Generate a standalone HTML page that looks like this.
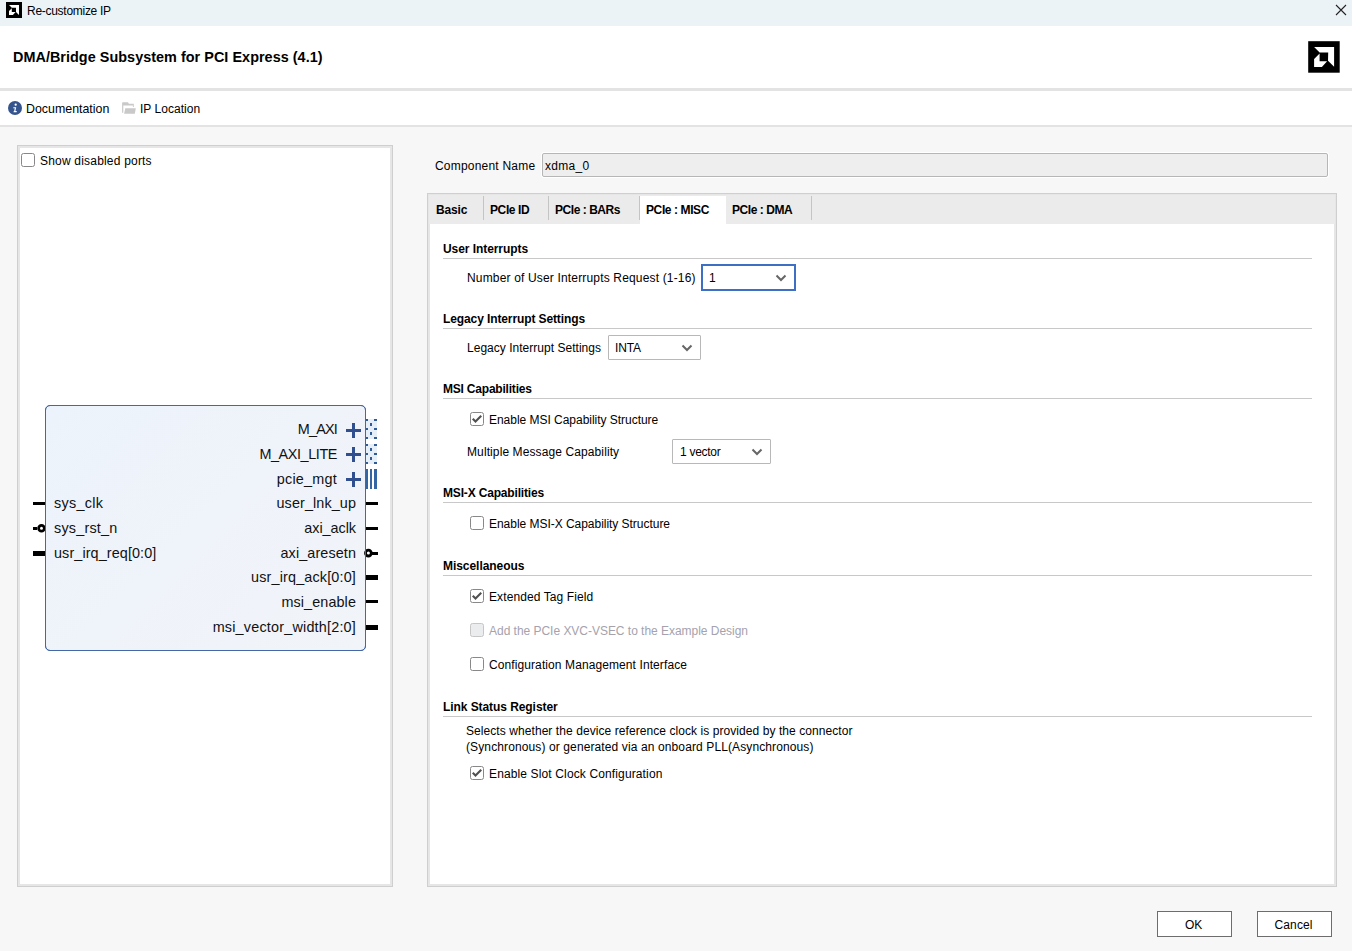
<!DOCTYPE html>
<html><head><meta charset="utf-8">
<style>
*{margin:0;padding:0;box-sizing:border-box}
html,body{width:1352px;height:951px;overflow:hidden;background:#f7f7f7;font-family:"Liberation Sans",sans-serif;font-size:12px;color:#000}
.a{position:absolute;white-space:nowrap}
#title{left:0;top:0;width:1352px;height:26px;background:#ebf3f7}
#hdr{left:0;top:26px;width:1352px;height:62px;background:#fff}
#hl1{left:0;top:88px;width:1352px;height:3px;background:#e3e3e3}
#tb{left:0;top:91px;width:1352px;height:34px;background:#fff}
#hl2{left:0;top:125px;width:1352px;height:2px;background:#e3e3e3}
.panel{background:#fff;border:1px solid #cfcfcf}
.panel:after{content:"";position:absolute;left:0;top:0;right:0;bottom:0;border:2px solid #e6e6e6}
.t12{font-size:12px;line-height:14px}
.b{font-weight:bold}
.sep{position:absolute;height:1px;background:#c8c8c8}
.cb{position:absolute;width:14px;height:14px;border:1.2px solid #888;border-radius:2.5px;background:#fff}
.cb.dis{border-color:#c6c6c6;background:#ebecee}
.dd{position:absolute;background:#fff;border:1px solid #b8b8b8;border-radius:1px}
.pin{font-size:14.4px;line-height:16px;color:#111}
.btn{position:absolute;background:#fff;border:1px solid #6d6d6d;text-align:center}
</style></head><body>
<!-- title bar -->
<div id="title" class="a"></div>
<svg class="a" style="left:6px;top:2px" width="16" height="16" viewBox="0 0 16 16">
<rect x="0" y="0" width="16" height="16" fill="#000"/>
<path d="M3 3 L13 3 L13 12.9 L10 9.9 L10 5.8 L5.8 5.8 Z" fill="#fff"/>
<path d="M3 13 L3 9.1 L5.8 6.3 L5.8 10.1 L9.6 10.1 L6.9 13 Z" fill="#fff"/>
</svg>
<div class="a" style="left:27px;top:4px;font-size:12px;letter-spacing:-0.28px;line-height:14px;color:#000">Re-customize IP</div>
<svg class="a" style="left:1335px;top:4px" width="12" height="12" viewBox="0 0 12 12"><path d="M1 1L11 11M11 1L1 11" stroke="#222" stroke-width="1.1"/></svg>
<!-- header -->
<div id="hdr" class="a"></div>
<div class="a b" style="left:13px;top:49px;font-size:14.4px;line-height:16px;letter-spacing:0.04px">DMA/Bridge Subsystem for PCI Express (4.1)</div>
<svg class="a" style="left:1308px;top:41px" width="32" height="32" viewBox="0 0 32 32">
<rect x="0.2" y="0.2" width="31.5" height="31.5" fill="#000"/>
<path d="M6.1 6.1 L26.1 6.1 L26.1 25.7 L20 19.8 L20.2 11.6 L11.6 11.6 Z" fill="#fff"/>
<path d="M6.1 25.9 L6.1 18.1 L11.6 12.6 L11.6 20.2 L19.1 20.2 L13.9 25.9 Z" fill="#fff"/>
</svg>
<div id="hl1" class="a"></div>
<!-- toolbar -->
<div id="tb" class="a"></div>
<svg class="a" style="left:8px;top:101px" width="14" height="14" viewBox="0 0 14 14">
<circle cx="7" cy="7" r="7" fill="#35538d"/>
<circle cx="7.7" cy="3.7" r="1.15" fill="#fff"/>
<path d="M5.4 6.2 L8.2 6.2 L7.4 10.1 L8.8 10.1 L8.6 11.2 L5.5 11.2 L5.8 10.1 L6.2 10.1 L6.8 7.2 L5.2 7.2 Z" fill="#fff"/>
</svg>
<div class="a t12" style="left:26px;top:102px;font-size:12.4px">Documentation</div>
<svg class="a" style="left:116px;top:97px" width="30" height="22" viewBox="0 0 30 22">
<g fill="#c9c9c9">
<path d="M6.1 6 Q6.1 5.2 6.9 5.2 L12 5.2 L12.8 6.8 L17.8 6.8 L17.8 10.1 L16.9 10.1 L16.9 8.6 L7.3 8.6 L7.3 15.8 L6.1 15.8 Z"/>
<path d="M9.3 11.2 L19.8 11.2 L18.8 16.8 L8.1 16.8 Z"/>
</g>
</svg>
<div class="a t12" style="left:140px;top:102px;letter-spacing:0.024px">IP Location</div>
<div id="hl2" class="a"></div>

<!-- left panel -->
<div class="a panel" style="left:17px;top:145px;width:376px;height:742px"></div>
<div class="cb" style="left:21px;top:153px;width:14px;height:14px"></div>
<div class="a t12" style="left:40px;top:154px;letter-spacing:0.197px">Show disabled ports</div>

<!-- block -->
<div class="a" style="left:45px;top:405px;width:321px;height:246px;border:1px solid #4467a8;border-radius:5px;background:linear-gradient(135deg,#edf3fc 0%,#f1f4f8 100%)"></div>
<svg class="a" style="left:0;top:0" width="400" height="700" viewBox="0 0 400 700">
<!-- left pins -->
<rect x="33" y="502" width="12" height="3" fill="#000"/>
<rect x="33" y="527" width="4" height="3" fill="#000"/>
<circle cx="41.5" cy="528.2" r="2.9" fill="#fff" stroke="#000" stroke-width="2.8"/>
<rect x="33" y="551" width="12" height="5" fill="#000"/>
<!-- right pins -->
<rect x="366" y="502" width="12" height="3" fill="#000"/>
<rect x="366" y="527" width="12" height="3" fill="#000"/>
<rect x="370" y="552" width="8" height="3" fill="#000"/>
<circle cx="368.4" cy="553.1" r="2.9" fill="#fff" stroke="#000" stroke-width="2.8"/>
<rect x="366" y="575" width="12" height="5" fill="#000"/>
<rect x="366" y="600" width="12" height="3" fill="#000"/>
<rect x="366" y="625" width="12" height="5" fill="#000"/>
<!-- plus signs -->
<g fill="#2f4f8f">
<rect x="346" y="429" width="15" height="3"/><rect x="352" y="423" width="3" height="15"/>
<rect x="346" y="453" width="15" height="3"/><rect x="352" y="447" width="3" height="15"/>
<rect x="346" y="478" width="15" height="3"/><rect x="352" y="472" width="3" height="15"/>
</g>
<!-- bus patterns -->
<rect x="366" y="419" width="11" height="20" fill="#e6eef8"/>
<rect x="366" y="444" width="11" height="20" fill="#e6eef8"/>
<g fill="#2f5b96">
<rect x="366" y="419" width="2" height="2"/><rect x="366" y="428" width="2" height="2"/><rect x="366" y="437" width="2" height="2"/>
<rect x="374" y="419" width="3" height="2"/><rect x="374" y="428" width="3" height="2"/><rect x="374" y="437" width="3" height="2"/>
<rect x="370" y="423" width="2" height="3"/><rect x="370" y="432" width="2" height="3"/>
<rect x="366" y="444" width="2" height="2"/><rect x="366" y="453" width="2" height="2"/><rect x="366" y="462" width="2" height="2"/>
<rect x="374" y="444" width="3" height="2"/><rect x="374" y="453" width="3" height="2"/><rect x="374" y="462" width="3" height="2"/>
<rect x="370" y="448" width="2" height="3"/><rect x="370" y="457" width="2" height="3"/>
<rect x="366" y="469" width="2" height="20" fill="#3466a4"/><rect x="370" y="469" width="2" height="20" fill="#3466a4"/><rect x="374" y="469" width="3" height="20" fill="#3466a4"/>
</g>
</svg>
<div class="a" style="left:45px;top:405px;width:321px;height:246px;border:1px solid #4467a8;border-radius:5px"></div>
<div class="a pin" style="left:54px;top:495px;letter-spacing:0.29px">sys_clk</div>
<div class="a pin" style="left:54px;top:520px;letter-spacing:0.21px">sys_rst_n</div>
<div class="a pin" style="left:54px;top:545px;letter-spacing:0.1px">usr_irq_req[0:0]</div>
<div class="a pin" style="right:1015px;top:421px;letter-spacing:-0.80px">M_AXI</div>
<div class="a pin" style="right:1015px;top:446px;letter-spacing:-0.40px">M_AXI_LITE</div>
<div class="a pin" style="right:1015px;top:471px;letter-spacing:0.23px">pcie_mgt</div>
<div class="a pin" style="right:996px;top:495px;letter-spacing:0.1px">user_lnk_up</div>
<div class="a pin" style="right:996px;top:520px;letter-spacing:-0.04px">axi_aclk</div>
<div class="a pin" style="right:996px;top:545px;letter-spacing:0.1px">axi_aresetn</div>
<div class="a pin" style="right:996px;top:569px;letter-spacing:0.16px">usr_irq_ack[0:0]</div>
<div class="a pin" style="right:996px;top:594px;letter-spacing:0.1px">msi_enable</div>
<div class="a pin" style="right:996px;top:619px;letter-spacing:0.20px">msi_vector_width[2:0]</div>

<!-- right side -->
<div class="a t12" style="left:435px;top:159px;letter-spacing:0.208px">Component Name</div>
<div class="a" style="left:542px;top:153px;width:786px;height:24px;background:#eeeeee;border:1px solid #b6b6b6;border-radius:2px;box-shadow:0 0 0 1px #fff"></div>
<div class="a t12" style="left:545px;top:159px;letter-spacing:0.285px">xdma_0</div>

<div class="a panel" style="left:427px;top:193px;width:910px;height:694px"></div>
<div class="a" style="left:429px;top:195px;width:906px;height:29px;background:#ebebeb"></div>
<div class="a" style="left:640px;top:196px;width:86px;height:28px;background:#fff"></div>
<div class="a" style="left:483px;top:196px;width:1px;height:24px;background:#c4c4c4"></div>
<div class="a" style="left:548px;top:196px;width:1px;height:24px;background:#c4c4c4"></div>
<div class="a" style="left:639px;top:196px;width:1px;height:24px;background:#c4c4c4"></div>
<div class="a" style="left:811px;top:196px;width:1px;height:24px;background:#c4c4c4"></div>
<div class="a t12 b" style="left:436px;top:203px;letter-spacing:-0.144px">Basic</div>
<div class="a t12 b" style="left:490px;top:203px;letter-spacing:-0.387px">PCIe ID</div>
<div class="a t12 b" style="left:555px;top:203px;letter-spacing:-0.456px">PCIe : BARs</div>
<div class="a t12 b" style="left:646px;top:203px;letter-spacing:-0.395px">PCIe : MISC</div>
<div class="a t12 b" style="left:732px;top:203px;letter-spacing:-0.437px">PCIe : DMA</div>

<!-- sections -->
<div class="a t12 b" style="left:443px;top:242px;letter-spacing:-0.068px">User Interrupts</div>
<div class="sep" style="left:443px;top:258px;width:869px"></div>
<div class="a t12" style="left:467px;top:271px;letter-spacing:0.165px">Number of User Interrupts Request (1-16)</div>
<div class="dd" style="left:701px;top:264px;width:95px;height:27px;border:2px solid #3d6fc4;border-radius:0"></div>
<div class="a t12" style="left:709px;top:271px">1</div>

<div class="a t12 b" style="left:443px;top:312px;letter-spacing:-0.108px">Legacy Interrupt Settings</div>
<div class="sep" style="left:443px;top:328px;width:869px"></div>
<div class="a t12" style="left:467px;top:341px;letter-spacing:0.024px">Legacy Interrupt Settings</div>
<div class="dd" style="left:608px;top:335px;width:93px;height:25px"></div>
<div class="a t12" style="left:615px;top:341px;letter-spacing:-0.11px">INTA</div>

<div class="a t12 b" style="left:443px;top:382px;letter-spacing:-0.208px">MSI Capabilities</div>
<div class="sep" style="left:443px;top:398px;width:869px"></div>
<div class="cb" style="left:470px;top:412px"></div>
<div class="a t12" style="left:489px;top:413px;letter-spacing:-0.028px">Enable MSI Capability Structure</div>
<div class="a t12" style="left:467px;top:445px;letter-spacing:0.104px">Multiple Message Capability</div>
<div class="dd" style="left:672px;top:439px;width:99px;height:25px"></div>
<div class="a t12" style="left:680px;top:445px;letter-spacing:-0.286px">1 vector</div>

<div class="a t12 b" style="left:443px;top:486px;letter-spacing:-0.168px">MSI-X Capabilities</div>
<div class="sep" style="left:443px;top:502px;width:869px"></div>
<div class="cb" style="left:470px;top:516px"></div>
<div class="a t12" style="left:489px;top:517px;letter-spacing:-0.033px">Enable MSI-X Capability Structure</div>

<div class="a t12 b" style="left:443px;top:559px;letter-spacing:-0.049px">Miscellaneous</div>
<div class="sep" style="left:443px;top:575px;width:869px"></div>
<div class="cb" style="left:470px;top:589px"></div>
<div class="a t12" style="left:489px;top:590px;letter-spacing:0.098px">Extended Tag Field</div>
<div class="cb dis" style="left:470px;top:623px"></div>
<div class="a t12" style="left:489px;top:624px;color:#a5a2ad;letter-spacing:-0.026px">Add the PCIe XVC-VSEC to the Example Design</div>
<div class="cb" style="left:470px;top:657px"></div>
<div class="a t12" style="left:489px;top:658px;letter-spacing:0.095px">Configuration Management Interface</div>

<div class="a t12 b" style="left:443px;top:700px;letter-spacing:-0.071px">Link Status Register</div>
<div class="sep" style="left:443px;top:716px;width:869px"></div>
<div class="a t12" style="left:466px;top:724px;letter-spacing:0.071px">Selects whether the device reference clock is provided by the connector</div>
<div class="a t12" style="left:466px;top:740px;letter-spacing:0.114px">(Synchronous) or generated via an onboard PLL(Asynchronous)</div>
<div class="cb" style="left:470px;top:766px"></div>
<div class="a t12" style="left:489px;top:767px;letter-spacing:0.131px">Enable Slot Clock Configuration</div>

<!-- checkmarks & chevrons -->
<svg class="a" style="left:0;top:0" width="1352" height="951" viewBox="0 0 1352 951">
<g fill="none" stroke="#505050" stroke-width="2.1" stroke-linecap="square">
<path d="M473.5 419.45 L475.5 421.45 L480.5 416.45"/>
<path d="M473.5 596.45 L475.5 598.45 L480.5 593.45"/>
<path d="M473.5 773.45 L475.5 775.45 L480.5 770.45"/>
</g>
<g fill="none" stroke="#666" stroke-width="2">
<path d="M776.5 275.5 L781 280 L785.5 275.5"/>
<path d="M682.5 345.5 L687 350 L691.5 345.5"/>
<path d="M752.5 449.5 L757 454 L761.5 449.5"/>
</g>
</svg>

<!-- buttons -->
<div class="btn" style="left:1157px;top:911px;width:75px;height:26px"></div>
<div class="a t12" style="left:1185px;top:918px">OK</div>
<div class="btn" style="left:1257px;top:911px;width:75px;height:26px"></div>
<div class="a t12" style="left:1274.5px;top:918px;letter-spacing:0.13px">Cancel</div>
</body></html>
